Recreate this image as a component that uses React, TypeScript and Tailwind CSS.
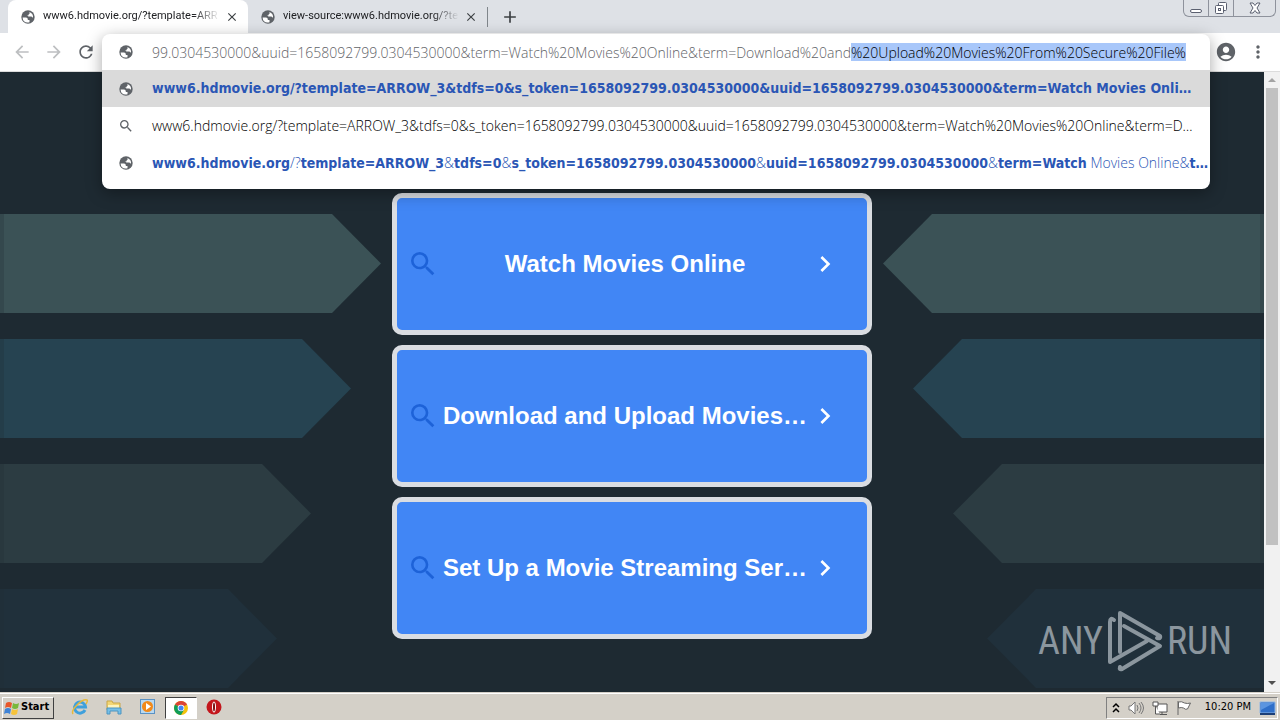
import { useEffect, useRef } from "react";
import {
  MdAccountCircle,
  MdAdd,
  MdArrowBack,
  MdArrowForward,
  MdChevronRight,
  MdClose,
  MdMoreVert,
  MdRefresh,
  MdSearch,
} from "react-icons/md";

const TYPED = "99.0304530000&uuid=1658092799.0304530000&term=Watch%20Movies%20Online&term=Download%20and";
const COMPLETION = "%20Upload%20Movies%20From%20Secure%20File%";

const RESULTS = ["Watch Movies Online", "Download and Upload Movies…", "Set Up a Movie Streaming Ser…"];

const ARROWS = [
  "w-[381px] bg-[#3b5256]",
  "w-[351px] bg-[#264351]",
  "w-[311px] bg-[#2c3c42]",
  "w-[277px] bg-[#20303b]",
];

function Globe() {
  return (
    <svg className="size-4 shrink-0" viewBox="0 0 16 16">
      <circle cx="8" cy="8" r="6.700" fill="#5f6368" />
      <path d="M2.600 8.500h3.400q1.800 0 1.800 1.700v.8h1.700v2.200Q6 14 4 12.200 2.700 10.700 2.600 8.500z" fill="#fff" />
      <path d="M9.500 2.900q2.300.8 3.200 2.900.5 1.500.2 2.900l-1.500-1.200H8.400L7.200 6.300h1.500V5h.8z" fill="#fff" />
    </svg>
  );
}

function Tab({ title, active }: { title: string; active?: boolean }) {
  return (
    <div
      className={
        active
          ? "flex h-full w-[240px] items-center rounded-t-lg bg-white pr-2 pl-3"
          : "flex h-full w-[239px] items-center pr-2 pl-3"
      }
    >
      <Globe />
      <span className="ml-[7px] flex-1 overflow-hidden [mask-image:linear-gradient(to_right,black_85%,transparent)] font-['Roboto'] text-[11px] whitespace-nowrap text-[#202124]">
        {title}
      </span>
      <button aria-label="Close tab" className="ml-1 flex size-4 items-center justify-center">
        <MdClose className="size-[14px] text-[#3c4043]" />
      </button>
    </div>
  );
}

function WindowButtons() {
  return (
    <div className="mr-1 flex h-[17px] self-start rounded-b-md border border-t-0 border-[#8e929c] text-[#5b6070]">
      <button aria-label="Minimize" className="flex w-[25px] items-end justify-center border-r border-[#8e929c] pb-[3px]">
        <span className="h-1 w-3 rounded-xs border border-[#5b6070] bg-white" />
      </button>
      <button aria-label="Restore" className="flex w-[25px] items-center justify-center border-r border-[#8e929c]">
        <svg className="size-[14px]" viewBox="0 0 14 14" fill="#fff" stroke="currentColor">
          <rect x="4.5" y="1.5" width="8" height="8" rx="1" />
          <rect x="1.5" y="4.5" width="8" height="8" rx="1" />
          <rect x="4.5" y="7.5" width="2" height="2" />
        </svg>
      </button>
      <button aria-label="Close" className="flex w-[41px] items-center justify-center">
        <svg className="size-3" viewBox="0 0 12 12" fill="#fff" stroke="currentColor">
          <path d="M1 1h3l2 2.500L8 1h3L8 6l3 5H8L6 8.500 4 11H1l3-5z" />
        </svg>
      </button>
    </div>
  );
}

function Omnibox() {
  const input = useRef<HTMLInputElement>(null);

  // keep the inline completion highlighted and the end of the url in view
  useEffect(() => {
    const el = input.current;
    if (!el) return;
    el.focus();
    el.setSelectionRange(TYPED.length, TYPED.length + COMPLETION.length);
    el.scrollLeft = el.scrollWidth;
  }, []);

  return (
    <div className="absolute inset-x-0 top-px z-10 rounded-lg bg-white pb-2 text-[14px] shadow-[0_4px_16px_rgba(0,0,0,0.35)]">
      <div className="flex h-9 items-center pr-6 pl-4">
        <Globe />
        <input
          ref={input}
          aria-label="Address and search bar"
          defaultValue={TYPED + COMPLETION}
          className="ml-[18px] h-[18px] min-w-0 flex-1 font-['Open_Sans'] font-light text-[#5f6368] outline-none selection:bg-[#a8c7fa] selection:text-black"
        />
      </div>
      <ul>
        <li className="flex h-[37px] items-center bg-[#dadada] px-4">
          <Globe />
          <a href="#" className="ml-[18px] font-['DejaVu_Sans_Condensed'] font-bold whitespace-nowrap text-[#2a56b5]">
            www6.hdmovie.org/?template=ARROW_3&amp;tdfs=0&amp;s_token=1658092799.0304530000&amp;uuid=1658092799.0304530000&amp;term=Watch Movies Onli…
          </a>
        </li>
        <li className="flex h-[37px] items-center px-4">
          <MdSearch className="size-4 shrink-0 text-[#5f6368]" />
          <a href="#" className="ml-[18px] font-['Open_Sans'] font-light whitespace-nowrap text-black">
            www6.hdmovie.org/?template=ARROW_3&amp;tdfs=0&amp;s_token=1658092799.0304530000&amp;uuid=1658092799.0304530000&amp;term=Watch%20Movies%20Online&amp;term=D…
          </a>
        </li>
        <li className="flex h-[37px] items-center px-4">
          <Globe />
          <a
            href="#"
            className="ml-[18px] font-['DejaVu_Sans_Condensed'] font-bold whitespace-nowrap text-[#2a56b5] [&_span]:font-['Open_Sans'] [&_span]:font-light"
          >
            www6.hdmovie.org<span>/?</span>template=ARROW_3<span>&amp;</span>tdfs=0<span>&amp;</span>s_token=1658092799.0304530000<span>&amp;</span>
            uuid=1658092799.0304530000<span>&amp;</span>term=Watch<span> Movies Online&amp;</span>t…
          </a>
        </li>
      </ul>
    </div>
  );
}

function Arrows({ mirrored }: { mirrored?: boolean }) {
  return (
    <div className={mirrored ? "flex -scale-x-100 flex-col gap-[26px] pt-[142px]" : "flex flex-col gap-[26px] pt-[142px]"}>
      {ARROWS.map((look) => (
        <div key={look} className={`${look} h-[99px] [clip-path:polygon(0_0,calc(100%-49px)_0,100%_50%,calc(100%-49px)_100%,0_100%)]`}>
          <div className="h-full w-1 bg-[#1e2a32]/25" />
        </div>
      ))}
    </div>
  );
}

function ResultCard({ title }: { title: string }) {
  return (
    <a
      href="#"
      className="flex h-[142px] items-center rounded-[10px] border-[5px] border-[#dadde2] bg-[#4186f5] pr-[26px] pl-[10px] font-['Liberation_Sans',sans-serif] text-white"
    >
      <MdSearch className="size-8 shrink-0 text-[#1d62d8]" />
      <span className="ml-[2px] flex-1 overflow-hidden text-center text-[24px] leading-8 font-bold whitespace-nowrap">{title}</span>
      <MdChevronRight className="size-8 shrink-0" />
    </a>
  );
}

function AnyRunLogo() {
  return (
    <div className="absolute right-8 bottom-5 flex h-[62px] items-center gap-1 font-['Liberation_Sans_Narrow','Roboto_Condensed','Liberation_Sans',sans-serif] text-[38px] leading-none text-[#8b969e]">
      <span>ANY</span>
      <svg className="h-[62px] w-14" viewBox="0 0 56 62" fill="none" stroke="currentColor" strokeWidth="4" strokeLinecap="round" strokeLinejoin="round">
        <path d="M7 10Q3 7 3 12V52L40 31" />
        <path d="M13 42V3L53 26Q54 29 50 28" />
        <path d="M17 16L53 36L15 59Q12 60 13 57" />
      </svg>
      <span>RUN</span>
    </div>
  );
}

function Scrollbar() {
  return (
    <div className="flex w-4 flex-col items-center bg-[#f1f1f1]">
      <svg className="h-4 w-4" viewBox="0 0 16 16"><path d="M4 10l4-4 4 4z" fill="#a3a3a3" /></svg>
      <div className="h-[457px] w-3 bg-[#c1c1c1]" />
      <svg className="mt-auto h-[18px] w-4" viewBox="0 0 16 18"><path d="M4 7l4 4 4-4z" fill="#505050" /></svg>
    </div>
  );
}

function StartMenuFlag() {
  return (
    <svg className="size-4" viewBox="0 0 16 16">
      <path d="M2 3q3-2 6 0L7 8Q4 6 1 8z" fill="#e8572a" />
      <path d="M9 3q3 2 6 0l-1 5q-3 2-6 0z" fill="#79b83a" />
      <path d="M1 9q3-2 6 0l-1 5q-3-2-6 0z" fill="#3f83d6" />
      <path d="M8 9q3 2 6 0l-1 5q-3 2-6 0z" fill="#f6c33a" />
    </svg>
  );
}

function Taskbar() {
  return (
    <footer className="flex h-[28px] items-center border-t border-[#d4d0c8] bg-[#d4d0c8] pr-[2px] pl-[2px] font-['DejaVu_Sans_Condensed'] text-[11px] text-black shadow-[inset_0_1px_0_#fff]">
      <button className="mt-[2px] flex h-[22px] w-[52px] items-center gap-px border border-t-white border-r-[#404040] border-b-[#404040] border-l-white pl-px font-bold">
        <StartMenuFlag />
        Start
      </button>
      <button aria-label="Internet Explorer" className="ml-[17px]">
        <svg className="size-[18px]" viewBox="0 0 18 18" fill="none">
          <path d="M14 12a5.500 5.500 0 1 1 .500-3H5" stroke="#3fa0dc" strokeWidth="3" />
          <path d="M2 16Q0 13 6 7T16 2q1 1-1 4" stroke="#e8b93a" strokeWidth="1.500" />
        </svg>
      </button>
      <button aria-label="Explorer" className="ml-4">
        <svg className="size-[18px]" viewBox="0 0 18 18">
          <path d="M2 3h5l1 2h7v7H2z" fill="#f2d675" stroke="#c9a648" />
          <path d="M3 7h11v3H3z" fill="#fdf3bd" />
          <path d="M2 10h14v6h-3v-3H5v3H2z" fill="#74bfe8" stroke="#4c94c0" />
        </svg>
      </button>
      <button aria-label="Media Player" className="ml-4">
        <svg className="size-[18px]" viewBox="0 0 18 18">
          <rect x="1.500" y="1.500" width="14" height="14" fill="#b9d9f1" stroke="#5a92c4" />
          <circle cx="8.500" cy="8.500" r="5.500" fill="#f28a1a" />
          <path d="M7 5l5 3.500L7 12z" fill="#fff" />
        </svg>
      </button>
      <button
        aria-label="Chrome"
        className="mt-[2px] ml-2 flex h-[22px] w-8 items-center justify-center border border-t-[#404040] border-r-white border-b-white border-l-[#404040] bg-white"
      >
        <svg className="size-[14px]" viewBox="0 0 16 16">
          <circle cx="8" cy="8" r="8" fill="#f4c20d" />
          <path d="M8 8L1.100 4A8 8 0 0 1 14.900 4z" fill="#db4437" />
          <path d="M8 8L1.100 4A8 8 0 0 0 8 16l3.500-6z" fill="#0f9d58" />
          <circle cx="8" cy="8" r="3.800" fill="#fff" />
          <circle cx="8" cy="8" r="2.900" fill="#4285f4" />
        </svg>
      </button>
      <button aria-label="Opera" className="ml-[9px]">
        <svg className="size-4" viewBox="0 0 16 16">
          <circle cx="8" cy="8" r="7.500" fill="#c3161c" />
          <ellipse cx="8" cy="8" rx="2" ry="5.500" fill="#fff" />
          <ellipse cx="8" cy="8" rx="1" ry="4.500" fill="#7d0c10" />
        </svg>
      </button>

      <div className="mt-[2px] ml-auto flex h-[22px] items-center border border-t-[#808080] border-r-white border-b-white border-l-[#808080] pr-px pl-[5px]">
        <svg className="h-3 w-2" viewBox="0 0 8 12" fill="none" stroke="#000" strokeWidth="1.500">
          <path d="M1 5l3-3 3 3M1 10l3-3 3 3" />
        </svg>
        <svg className="ml-2 size-4" viewBox="0 0 16 16" fill="#fff" stroke="#777">
          <path d="M1 6h2l4-4v12l-4-4H1z" />
          <path d="M9 5q2 3 0 6M11 3q4 5 0 10M13 2q5 6 0 12" fill="none" />
        </svg>
        <svg className="ml-2 size-4" viewBox="0 0 16 16" fill="#fff" stroke="#555">
          <path d="M5 4h10v8H5zM8 14.500h7M10 12v2" />
          <path d="M1 2h5v4H1zM3.500 6v8H8" />
        </svg>
        <svg className="ml-2 size-4" viewBox="0 0 16 16" fill="#fff" stroke="#666">
          <path d="M2 1v14M2.500 2q3-1 6 1 3 1 6 0l-3 6q-2 1-4-1-2-1-5 0z" />
        </svg>
        <time className="ml-[13px]">10:20 PM</time>
        <svg className="ml-2 h-4 w-[17px]" viewBox="0 0 17 16">
          <path d="M1 2h15v11H1z" fill="#2f6fc9" stroke="#8fb6e4" />
          <path d="M2 3h13L2 10z" fill="#5b95e0" />
          <path d="M1 13h15v2H1z" fill="#1c3f77" />
        </svg>
      </div>
    </footer>
  );
}

export default function App() {
  return (
    <div className="flex h-screen flex-col overflow-hidden bg-[#1e2a32] font-['DejaVu_Sans',sans-serif]">
      <header className="flex h-[33px] shrink-0 items-center bg-[#dee1e6] pl-2">
        <Tab title="www6.hdmovie.org/?template=ARR" active />
        <Tab title="view-source:www6.hdmovie.org/?te" />
        <div className="h-5 w-px bg-[#80868b]" />
        <button aria-label="New tab" className="ml-3">
          <MdAdd className="size-5 text-[#3c4043]" />
        </button>
        <div className="ml-auto flex h-full">
          <WindowButtons />
        </div>
      </header>

      <nav className="flex h-[39px] shrink-0 items-center border-b border-[#dcdcdc] bg-white">
        <div className="flex w-[102px] items-center gap-3 pl-3">
          <button aria-label="Back"><MdArrowBack className="size-5 text-[#bdbfc1]" /></button>
          <button aria-label="Forward"><MdArrowForward className="size-5 text-[#bdbfc1]" /></button>
          <button aria-label="Reload"><MdRefresh className="size-5 text-[#5f6368]" /></button>
        </div>
        <div className="relative h-full flex-1">
          <Omnibox />
        </div>
        <div className="flex w-[70px] items-center justify-between pr-3 pl-[5px]">
          <button aria-label="Profile"><MdAccountCircle className="size-[22px] text-[#5f6368]" /></button>
          <button aria-label="Menu"><MdMoreVert className="size-5 text-[#5f6368]" /></button>
        </div>
      </nav>

      <div className="flex min-h-0 flex-1">
        <main className="relative grid flex-1 grid-cols-[1fr_480px_1fr] overflow-hidden">
          <Arrows />
          <div className="flex flex-col gap-[10px] pt-[121px]">
            {RESULTS.map((title) => (
              <ResultCard key={title} title={title} />
            ))}
          </div>
          <Arrows mirrored />
          <AnyRunLogo />
        </main>
        <Scrollbar />
      </div>

      <Taskbar />
    </div>
  );
}
